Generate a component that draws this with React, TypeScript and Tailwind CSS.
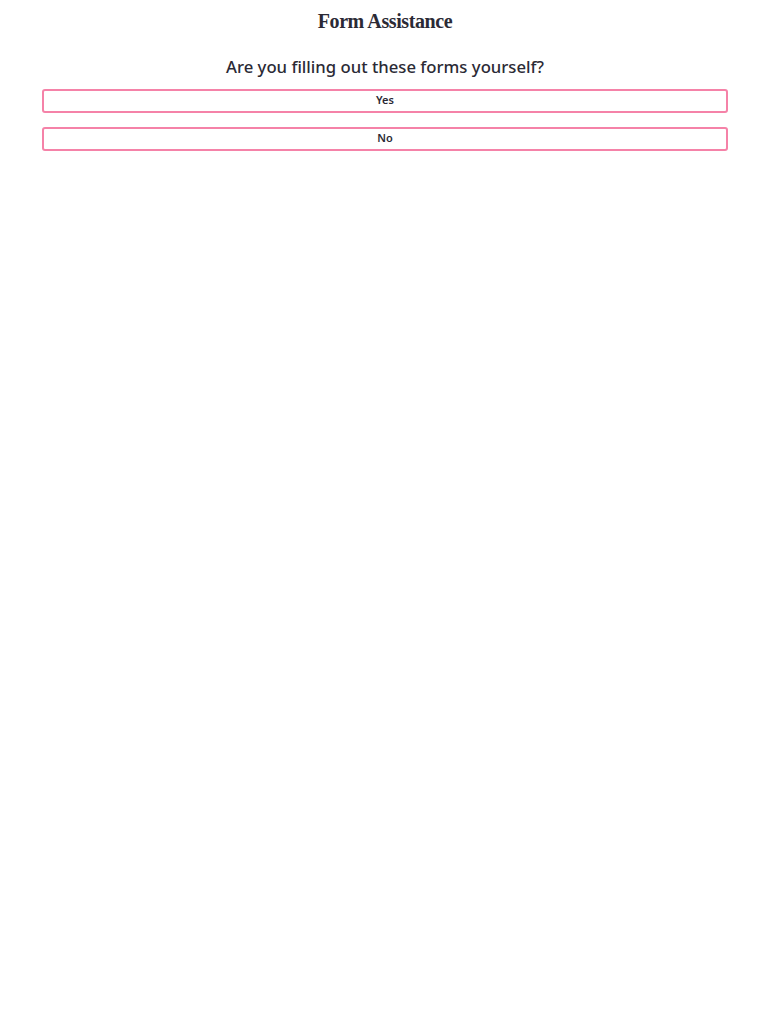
export default function App() {
  return (
    <div className="min-h-screen bg-white px-[42px] pt-[10px]">
      <h1 className="text-center font-['Liberation_Serif',serif] text-[20px] font-bold leading-[22px] tracking-[-0.4px] text-[#2b2a35]">
        Form Assistance
      </h1>
      <h2 className="mt-[24px] text-center font-['Noto_Sans',sans-serif] text-[16.7px] font-medium leading-[22px] text-[#2b2a35]">
        Are you filling out these forms yourself?
      </h2>
      <div className="mt-[11px] flex flex-col gap-[14px]">
        {["Yes", "No"].map((t) => (
          <button
            key={t}
            className="h-[24px] w-full rounded-[3px] border-2 border-[#f582a8] bg-white pb-[1px] font-['Noto_Sans',sans-serif] text-[11px] font-semibold text-[#2b2a35]"
          >
            {t}
          </button>
        ))}
      </div>
    </div>
  );
}
